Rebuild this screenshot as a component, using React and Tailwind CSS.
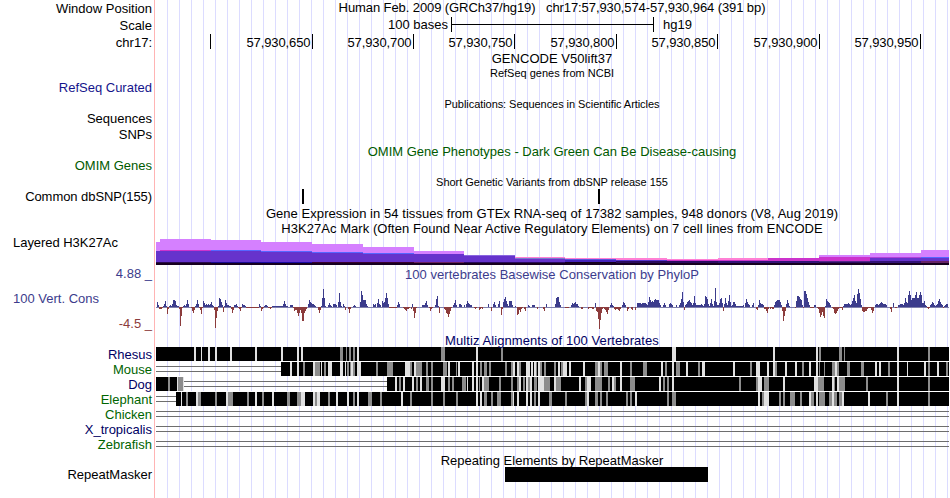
const GRID = Array.from({ length: 66 }, (_, i) => 167 + i * 12);

// Each run is [first x, height, height, ...]; negative heights go below the axis.
const CONSERVATION = [
  [157,5,2,-2,-2,-2,-1,1,3,6,1,-7,-2,1,2,1,3,7,7,6,2,1,1,-2,-19,-9,-1,1,2,1,3,7,3],
  [191,-1,-4,-6,-3,1,3,7,3,-1,-3,-7,-1,6,4,2,3,2,3,2,3,5,2,1,-3,-21,-11,-4,1,9,8,5,2,-5,1,7,4,2,2,1,1],
  [231,-2,-6,-3,2,2,3,1],[238,-1,-2,-4,-1,3,2,2,1,-1,-1,-1,-1,-1,-1,-1,-1,-1,-1,-1,-1,-1,3,1,-4,-2,-1],
  [264,1,2,2,1],[268,-1,-1,-2,-1],[272,1,1,1,1,1,1,1,1,1,1,1,3,6,3,1,1],[290,2,2,2],
  [293,-1,-4,-3,-3,-6,-9,-6,-3,-6,-14,-14,-6,-4,-2],[308,3,7,5,4,3,3,2,1],[318,-3,-6,-3],[321,1,9,18,9,1],[328,2,4,2,1],[333,3,3,3,2],[338,5,14,5,1],[343,3,1,-3],[348,-2,-6,-2],[353,1,2,1],
  [360,5,16,12,7,7,7,3,1],[373,3,2,3],[377,4,8,3,2],[382,6,4,5,9,14,9,3],[389,-1,-1,-1,-1,-1,-1,-1,-1],[397,2,5,3],[403,-1,-2,-3,-4,-2,-2,-1],[411,-2,3,-4,-11,-6,-1],
  [422,2,2,2,4,6,2],[429,-1,-4,-2,-1],[435,2,8,11,1,-6],[444,-2,-3,-6,-7,-10,-7,-4,-1],[453,2,4,7,2],[459,3,3,2],[464,2],[466,3,6,4,3,2,2],[474,-1,-2,-1],[479,-3,-2,-1,-2],[488,3],[491,-4],[493,3,5,2],[498,3,6],[501,-8,-2,5,8,10,6,3,1,6,6,6,2],[515,1],
  [517,-8,-7,-3,-5,-2,-1],[524,-2,-4],[528,2,1],[532,2,2,2],[537,-2],[543,-2,-4],[546,3],[555,3,9,10,10,5,2],[565,-1,-1,-1,-1],[571,2,4,3,4,5,3,3,1],[581,-2,-2],[588,-2,-1,-1,-1,-2,-2],[595,4,-4,-5,-12,-22,-13,-6,-2,-1,-2,-3,-5,-7,-3],[610,2,4,2,1],[614,-2,-3,-2,-2,-3,-4,-2],[622,2,5,4,2],[627,-4,-2],[631,-2,-3],[635,-3],
  [637,4,4,4,4,3,4,4,4,4,3,2,5,10,7,5,6,5,7,8,7,7,7,4,2],[663,2,4,2],[669,3,4,3,2],[676,2],[679,2,4,8,15,5,-3,2,3,5,6,7,5,4,2,4,11,4,2,2,2,2,2,3,2,1,3,11,10,8,3,1,4,8,3,1,6,19,5,2,2,4,8,9,4,-4,3,9,4,2,6,12,5,1,2,5,5,3,1,1,1,1,1,1,1,2],
  [745,4,8,5,3,2],[752,2,4],[756,-2,-3],[758,2,7,4,3,3,2,-2,-2,-4,-6,-2],[770,-2,-1,-2,-2,2,5,6,7,7,7,5,2,-4,-14,-9,-4,3,7,4,1],[795,-1,6,11,11,10,8,7,2,-1,16,16,13,9,5,2,-1,-1,-1,-1,2,2],
  [817,-1,-2,-6,-10,-8,-5,-9,-11,1,8,6,5,4,2],[832,-1,-2,-6,-7,-6,-4,-2,-1,-1,-1,-3,1,3,3,3,3,4,3,2,3,6,9,12,6,4,13,18,14,8,2,-4,-5,-5,-4,-4,-2,-1,-1,-1,-3,-6,-4],
  [875,2,3,3,2,3,4,5,4,3,3,3,2],[890,-2,-5],[893,4],[895,-1,-1],[898,2,2,3,3,3,2,4,9,5,4,12,16,12,7,9,9,9,12,15,9,9,12,15,12,4,4,6,2,1,-1,-2,-1,2,3,5,4,2,1,2,3,6,8,5,3,2,-1,1,2,3,3],
];

// Each mark is [x, width]. "pale" bases differ entirely, "mid" ones partly.
const SPECIES = [
  {
    name: 'Rhesus', color: 'text-[#000064]', blocks: [[156, 793]], gaps: [],
    pale: [[194,2],[201,1],[208,2],[215,2],[230,2],[255,2],[281,2],[297,2],[301,2],[357,2],[476,2],[672,4],[773,2],[816,2],[897,2]],
    mid: [[340,3],[346,1],[349,2],[353,2],[441,4],[501,2],[819,2],[839,3],[844,1],[928,2]],
  },
  {
    name: 'Mouse', color: 'text-[#006400]', blocks: [[281, 668]], gaps: [[156, 125]],
    pale: [[290,2],[297,2],[313,2],[321,1],[328,4],[340,3],[345,1],[351,2],[357,4],[405,5],[414,2],[448,2],[458,2],[472,2],[476,2],[513,2],[517,2],[526,4],[531,2],[534,2],[538,2],[558,2],[563,4],[569,2],[583,2],[598,2],[620,2],[661,2],[672,2],[686,2],[702,3],[733,2],[756,4],[767,2],[773,2],[785,2],[795,2],[809,2],[816,2],[835,2],[875,2],[879,2],[897,2],[907,1],[924,2],[937,2]],
    mid: [[303,2],[315,5],[324,2],[347,2],[350,1],[353,2],[376,2],[387,6],[410,2],[416,6],[426,2],[431,2],[443,4],[456,1],[480,2],[484,3],[489,2],[505,2],[511,2],[519,2],[536,1],[540,2],[544,2],[554,2],[561,2],[595,3],[600,2],[604,4],[630,2],[643,4],[665,2],[676,4],[698,2],[750,2],[775,2],[802,2],[819,1],[824,1],[832,3],[837,2],[847,3],[861,3],[888,2],[928,2],[946,2]],
  },
  {
    name: 'Dog', color: 'text-[#000064]', blocks: [[156, 28], [387, 562]], gaps: [[184, 203]],
    pale: [[177,1],[183,1],[395,2],[403,2],[412,2],[420,2],[441,4],[467,1],[472,2],[476,2],[482,2],[519,2],[526,2],[530,2],[538,6],[554,2],[579,2],[587,4],[612,2],[620,2],[659,2],[672,2],[758,4],[783,2],[814,4],[832,2],[837,2],[897,2]],
    mid: [[168,2],[178,5],[399,2],[416,2],[426,3],[431,2],[448,2],[452,2],[462,4],[479,1],[484,5],[499,2],[511,2],[517,2],[523,2],[528,2],[534,3],[544,6],[556,5],[585,2],[595,7],[608,2],[614,2],[630,5],[663,2],[667,2],[739,2],[756,2],[764,5],[818,6],[834,1],[839,6],[866,2],[928,2]],
  },
  {
    name: 'Elephant', color: 'text-[#006400]', blocks: [[176, 773]], gaps: [[156, 20]],
    pale: [[181,1],[196,2],[226,2],[255,2],[272,2],[301,4],[313,2],[317,3],[336,2],[347,2],[357,2],[401,2],[476,2],[480,2],[513,1],[517,2],[526,2],[530,2],[538,2],[587,2],[635,2],[758,2],[764,5],[809,2],[816,2],[832,2],[842,2],[868,2],[897,2]],
    mid: [[186,2],[198,3],[215,2],[228,5],[247,2],[262,2],[287,3],[297,4],[315,2],[328,2],[353,2],[368,4],[380,2],[410,2],[431,2],[443,2],[456,2],[484,3],[491,2],[497,4],[511,2],[534,2],[549,3],[565,2],[585,2],[595,3],[600,2],[606,2],[626,2],[630,2],[667,2],[672,4],[762,2],[779,2],[783,2],[790,5],[800,2],[811,3],[819,6],[829,3],[834,3],[839,3],[886,2],[928,2]],
  },
  { name: 'Chicken', color: 'text-[#006400]', blocks: [], gaps: [[156, 793]], pale: [], mid: [] },
  { name: 'X_tropicalis', color: 'text-[#000064]', blocks: [], gaps: [[156, 793]], pale: [], mid: [] },
  { name: 'Zebrafish', color: 'text-[#006400]', blocks: [], gaps: [[156, 793]], pale: [], mid: [] },
];

// [x, end, [[top y, colour], ...]]; each layer runs down to the next one.
const H3K27AC = [
  [156,160,[[242,'#d580ff'],[251,'#6633cc'],[262,'#2a0a50'],[263,'#16001f']]],
  [160,211,[[239,'#d580ff'],[250,'#cc33cc'],[251,'#6633cc'],[262,'#2a0a50'],[263,'#16001f']]],
  [211,261,[[240,'#d580ff'],[250,'#5566ff'],[251,'#6633cc'],[262,'#1a0a90'],[263,'#16001f']]],
  [261,312,[[242,'#d580ff'],[251,'#5566ff'],[252,'#6633cc'],[262,'#1a0aa0'],[263,'#16001f']]],
  [312,363,[[244,'#d580ff'],[252,'#5566ff'],[253,'#6633cc'],[262,'#3a0030'],[263,'#16001f']]],
  [363,414,[[247,'#d580ff'],[253,'#5566ff'],[254,'#6633cc'],[262,'#3a0030'],[263,'#16001f']]],
  [414,464,[[251,'#d580ff'],[254,'#6633cc'],[262,'#6a2060'],[263,'#16001f']]],
  [464,515,[[255,'#8a66e0'],[256,'#6633cc'],[262,'#2a0a60'],[263,'#16001f']]],
  [515,565,[[257,'#ff80d5'],[258,'#7a7acc'],[259,'#6633cc'],[262,'#2a0a60'],[263,'#16001f']]],
  [565,616,[[258,'#ff80d5'],[259,'#5c55dd'],[260,'#4422bb'],[262,'#16001f']]],
  [616,667,[[258,'#ff80d5'],[260,'#5533cc'],[261,'#2a0a60'],[263,'#16001f']]],
  [667,718,[[259,'#ff80d5'],[260,'#cc33cc'],[261,'#2a0a60'],[263,'#16001f']]],
  [718,768,[[258,'#ff80d5'],[260,'#cc33cc'],[261,'#331177'],[263,'#16001f']]],
  [768,819,[[258,'#cc33cc'],[261,'#331177'],[263,'#16001f']]],
  [819,870,[[255,'#d580ff'],[257,'#cc33cc'],[261,'#552288'],[262,'#2a0a60'],[263,'#16001f']]],
  [870,921,[[253,'#d580ff'],[257,'#b040d8'],[258,'#6633cc'],[261,'#331177'],[263,'#16001f']]],
  [921,949,[[250,'#d580ff'],[257,'#5566ff'],[258,'#6633cc'],[261,'#662266'],[263,'#16001f']]],
];

const TICKS = [[312,'57,930,650'],[413,'57,930,700'],[514,'57,930,750'],[616,'57,930,800'],[717,'57,930,850'],[819,'57,930,900'],[920,'57,930,950']];

function Row({ h, label, labelClass = 'text-right', titleClass = '', children }) {
  return (
    <div className="flex w-full shrink-0 items-start" style={{ height: h }}>
      <div className={`w-[152px] shrink-0 ${labelClass}`}>{label}</div>
      <div className={`ml-[3px] min-w-0 flex-1 pr-px text-center ${titleClass}`}>{children}</div>
    </div>
  );
}

function Drawing() {
  return (
    <svg className="absolute inset-0" width="950" height="498" viewBox="0 0 950 498" shapeRendering="crispEdges" aria-hidden="true">
      <rect x="154" y="0" width="1" height="498" fill="#ffb4b4" />
      {GRID.map((x) => <rect key={x} x={x} y="0" width="1" height="498" fill="#dcdcff" />)}
      <path d="M451 17h1v15h-1zM653 17h1v15h-1zM452 24h201v1h-201z" />
      {[210, ...TICKS.map((t) => t[0])].map((x) => <rect key={x} x={x} y="34" width="1" height="15" />)}
      <path d="M302 189h2v15h-2zM598 189h2v15h-2z" />
      {H3K27AC.map(([x, end, layers]) => layers.map(([y, fill]) => (
        <rect key={`${x}-${y}`} x={x} y={y} width={end - x} height={265 - y} fill={fill} />
      )))}
      <rect x="156" y="307" width="793" height="1" fill="#8080ac" />
      {CONSERVATION.map(([x, ...hs]) => hs.map((v, i) => (
        <rect key={x + i} x={x + i} y={v > 0 ? 307 - v : 307} width="1" height={Math.abs(v)} fill={v > 0 ? '#3c3c8c' : '#8c3c3c'} />
      )))}
      {SPECIES.map((s, i) => {
        const y = 347 + i * 15;
        return (
          <g key={s.name}>
            {s.gaps.map(([x, w]) => (
              <path key={x} d={`M${x} ${y + 4}h${w}v1h-${w}zM${x} ${y + 9}h${w}v1h-${w}z`} fill="#6e6e6e" />
            ))}
            {s.blocks.map(([x, w]) => (
              <g key={x}>
                {i > 0 && <rect x={x} y={y - 1} width={w} height="1" fill="#fff" />}
                <rect x={x} y={y} width={w} height="14" />
              </g>
            ))}
            {s.pale.map(([x, w]) => <rect key={x} x={x} y={y} width={w} height="14" fill="#e1e1e1" />)}
            {s.mid.map(([x, w]) => <rect key={x} x={x} y={y} width={w} height="14" fill="#8c8c8c" />)}
          </g>
        );
      })}
      <rect x="505" y="467" width="203" height="15" />
    </svg>
  );
}

export default function App() {
  return (
    <div className="relative h-[498px] w-[950px] overflow-hidden bg-white font-['Liberation_Sans',Arial,sans-serif] text-[13px] leading-[15px] whitespace-pre text-black">
      <Drawing />
      <div className="relative flex flex-col">
        <Row h={17} label="Window Position" labelClass="pt-px text-right" titleClass="tracking-[-0.09px]">
          {'Human Feb. 2009 (GRCh37/hg19)   chr17:57,930,574-57,930,964 (391 bp)'}
        </Row>
        <Row h={16} label="Scale" labelClass="pt-px text-right">
          <div className="flex w-full">
            <span className="w-[293px] text-right">100 bases</span>
            <span className="ml-[215px]">hg19</span>
          </div>
        </Row>
        <Row h={18} label="chr17:" labelClass="pt-0.5 text-right" titleClass="pt-0.5">
          <div className="flex w-full tracking-[-0.1px]">
            {TICKS.map(([x, t], i) => (
              <span key={x} className="shrink-0 text-right" style={{ width: i ? x - TICKS[i - 1][0] : x - 156.5 }}>{t}</span>
            ))}
          </div>
        </Row>
        <Row h={15} titleClass="tracking-[0.04px]">GENCODE V50lift37</Row>
        <Row h={14} titleClass="text-[11px]">RefSeq genes from NCBI</Row>
        <Row h={17} label="RefSeq Curated" labelClass="text-right text-[#14148c]" />
        <Row h={14} titleClass="text-[11px] tracking-[-0.06px]">Publications: Sequences in Scientific Articles</Row>
        <Row h={16} label="Sequences" />
        <Row h={17} label="SNPs" />
        <Row h={14} titleClass="text-[#005a00]">OMIM Gene Phenotypes - Dark Green Can Be Disease-causing</Row>
        <Row h={17} label="OMIM Genes" labelClass="text-right text-[#005a00]" />
        <Row h={14} titleClass="text-[11px] tracking-[-0.03px]">Short Genetic Variants from dbSNP release 155</Row>
        <Row h={17} label="Common dbSNP(155)" labelClass="text-right tracking-[-0.06px]" />
        <Row h={15} titleClass="tracking-[0.055px]">Gene Expression in 54 tissues from GTEx RNA-seq of 17382 samples, 948 donors (V8, Aug 2019)</Row>
        <Row h={14} titleClass="tracking-[0.045px]">H3K27Ac Mark (Often Found Near Active Regulatory Elements) on 7 cell lines from ENCODE</Row>
        <Row h={31} label="Layered H3K27Ac" labelClass="pl-[13px] tracking-[-0.04px]" />
        <Row h={25} label="4.88 _" labelClass="text-right text-[#3c3c8c]" titleClass="pt-px tracking-[0.04px] text-[#3c3c8c]">100 vertebrates Basewise Conservation by PhyloP</Row>
        <Row h={25} label="100 Vert. Cons" labelClass="pl-[13px] text-[#3c3c8c]" />
        <Row h={17} label="-4.5 _" labelClass="text-right text-[#8c3c3c]" />
        <Row h={14} titleClass="tracking-[0.08px] text-[#000064]">Multiz Alignments of 100 Vertebrates</Row>
        {SPECIES.map((s) => <Row key={s.name} h={15} label={s.name} labelClass={`text-right ${s.color}`} />)}
        <Row h={15} titleClass="pt-px">Repeating Elements by RepeatMasker</Row>
        <Row h={15} label="RepeatMasker" />
      </div>
    </div>
  );
}
